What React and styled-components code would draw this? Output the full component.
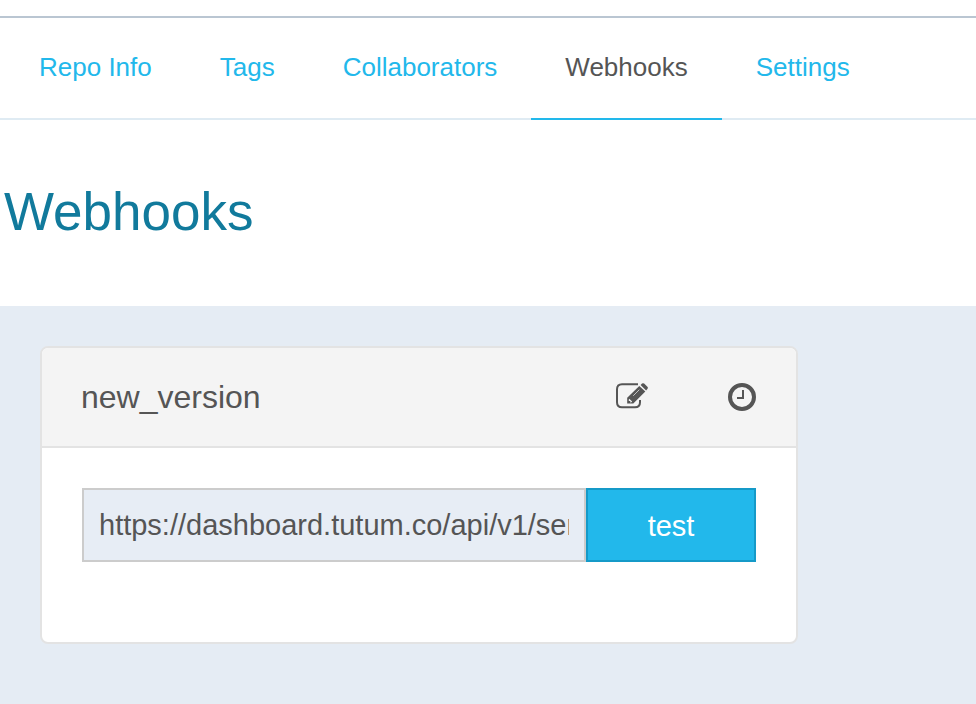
import React, { useState } from 'react';
import styled, { createGlobalStyle, ThemeProvider } from 'styled-components';

const theme = {
  blue: '#22b8eb',
  darkBlue: '#117a9c',
  grey: '#555555',
  pale: '#e5ecf4',
  line: '#e3e3e3',
  font: "'Liberation Sans', Helvetica, Arial, sans-serif",
};

const GlobalStyle = createGlobalStyle`
  * {
    box-sizing: border-box;
  }

  body {
    margin: 0;
    background-color: #ffffff;
    font-family: ${({ theme }) => theme.font};
  }
`;

const StyledWrapper = styled.div`
  min-height: 100vh;
  display: flex;
  flex-direction: column;
  padding-top: 16px;
`;

const StyledNav = styled.nav`
  display: flex;
  padding: 0 5px;
  border-top: 2px solid #bac6d2;
  border-bottom: 2px solid #dfebf3;
`;

const StyledTab = styled.a`
  padding: 33px 34px 35px;
  margin-bottom: -2px;
  border-bottom: 2px solid ${({ theme, $active }) => ($active ? theme.blue : 'transparent')};
  color: ${({ theme, $active }) => ($active ? theme.grey : theme.blue)};
  font-size: 26px;
  line-height: 32px;
  text-decoration: none;
`;

const StyledHeading = styled.h1`
  margin: 0;
  padding: 59px 4px 61px;
  color: ${({ theme }) => theme.darkBlue};
  font-size: 53px;
  font-weight: 400;
  line-height: 66px;
`;

const StyledContent = styled.main`
  flex: 1;
  padding: 40px;
  background-color: ${({ theme }) => theme.pale};
`;

const StyledCard = styled.section`
  max-width: 758px;
  border: 2px solid ${({ theme }) => theme.line};
  border-radius: 8px;
  background-color: #ffffff;
  overflow: hidden;
`;

const StyledCardHeader = styled.header`
  display: flex;
  align-items: center;
  padding: 30px 40px 30px 39px;
  border-bottom: 2px solid ${({ theme }) => theme.line};
  background-color: #f4f4f4;
`;

const StyledCardTitle = styled.h2`
  flex: 1;
  margin: 0;
  color: ${({ theme }) => theme.grey};
  font-size: 32px;
  font-weight: 400;
  line-height: 38px;
`;

const StyledActions = styled.div`
  display: flex;
  align-items: center;
  gap: 80px;
`;

const StyledIconButton = styled.button`
  display: flex;
  padding: 0;
  border: 0;
  background-color: inherit;
  color: ${({ theme }) => theme.grey};
`;

const StyledForm = styled.form`
  display: flex;
  padding: 40px 40px 80px;
`;

const StyledInput = styled.input`
  flex: 1;
  min-width: 0;
  height: 74px;
  padding: 0 15px;
  border: 2px solid #cccccc;
  border-radius: 0;
  outline: none;
  background-color: #e7edf5;
  color: ${({ theme }) => theme.grey};
  font-family: inherit;
  font-size: 29px;
`;

const StyledTestButton = styled.button`
  width: 170px;
  height: 74px;
  padding: 2px 0 0;
  border: 2px solid #159ac8;
  background-color: ${({ theme }) => theme.blue};
  color: #ffffff;
  font-family: inherit;
  font-size: 29px;
`;

const tabs = ['Repo Info', 'Tags', 'Collaborators', 'Webhooks', 'Settings'];

const EditIcon = () => (
  <svg width="32" height="28" viewBox="0 0 32 28" aria-hidden="true">
    <path
      d="M22 1.2H6Q1 1.2 1 6.2V19.2Q1 24.2 6 24.2H19Q24 24.2 24 19.2V17"
      fill="none"
      stroke="currentColor"
      strokeWidth="2"
    />
    <path fill="currentColor" d="M23.3 3L29.3 8.6L17.3 20.6H11.2V14.7Z" />
    <path fill="#f4f4f4" d="M13.2 15.8L16.2 18.6L15 19.6H14.3V18.1H12.8V16.4Z" />
    <path d="M17.2 12.8L23.3 6.7" stroke="#f4f4f4" strokeWidth="0.7" />
    <path fill="currentColor" d="M24.6 1.9L26 0.6Q27 -0.3 28.1 0.6L31.4 3.8Q32.3 4.8 31.4 5.9L30.1 7.4Z" />
  </svg>
);

const ClockIcon = () => (
  <svg width="28" height="28" viewBox="0 0 28 28" fill="none" stroke="currentColor" aria-hidden="true">
    <circle cx="14" cy="14" r="12" strokeWidth="4" />
    <path d="M15 7V15H9" strokeWidth="2" />
  </svg>
);

const App = () => {
  const [url, setUrl] = useState('https://dashboard.tutum.co/api/v1/service/');

  return (
    <ThemeProvider theme={theme}>
      <GlobalStyle />
      <StyledWrapper>
        <StyledNav>
          {tabs.map((tab) => (
            <StyledTab key={tab} href="#" $active={tab === 'Webhooks'}>
              {tab}
            </StyledTab>
          ))}
        </StyledNav>
        <StyledHeading>Webhooks</StyledHeading>
        <StyledContent>
          <StyledCard>
            <StyledCardHeader>
              <StyledCardTitle>new_version</StyledCardTitle>
              <StyledActions>
                <StyledIconButton aria-label="Edit">
                  <EditIcon />
                </StyledIconButton>
                <StyledIconButton aria-label="History">
                  <ClockIcon />
                </StyledIconButton>
              </StyledActions>
            </StyledCardHeader>
            <StyledForm onSubmit={(e) => e.preventDefault()}>
              <StyledInput aria-label="Webhook URL" value={url} onChange={(e) => setUrl(e.target.value)} />
              <StyledTestButton type="submit">test</StyledTestButton>
            </StyledForm>
          </StyledCard>
        </StyledContent>
      </StyledWrapper>
    </ThemeProvider>
  );
};

export default App;
